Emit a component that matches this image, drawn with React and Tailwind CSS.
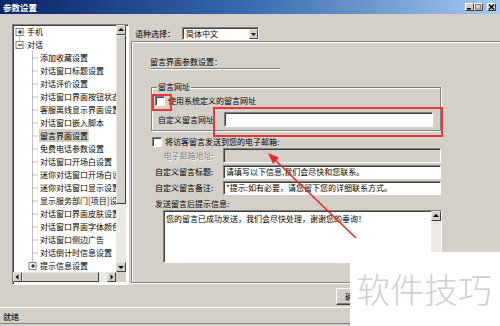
import React from 'react';

const Tri = ({ dir }) => {
  const pts = {
    up: '1,5 4,2 7,5',
    down: '1,3 4,6 7,3',
    left: '5,1 2,4 5,7',
    right: '3,1 6,4 3,7',
  }[dir];
  return (
    <svg width="8" height="8" viewBox="0 0 8 8">
      <polygon points={pts} fill="#000" />
    </svg>
  );
};

const SBtn = ({ dir, cls }) => (
  <div
    className={
      'flex items-center justify-center shrink-0 bg-[#d4d0c8] border border-t-[#e8e6e2] border-l-[#e8e6e2] border-b-[#404040] border-r-[#404040] ' +
      cls
    }
  >
    <Tri dir={dir} />
  </div>
);

const Check = () => (
  <div className="w-[10px] h-[10px] shrink-0 bg-white border border-t-[#808080] border-l-[#808080] border-b-white border-r-white shadow-[inset_1px_1px_0_#404040]" />
);

const sunken =
  'border border-t-[#808080] border-l-[#808080] border-b-white border-r-white shadow-[inset_1px_1px_0_#404040]';

const tree = [
  ['手机', 0, '+'],
  ['对话', 0, '-'],
  ['添加收藏设置', 1],
  ['对话窗口标题设置', 1],
  ['对话评价设置', 1],
  ['对话窗口界面按钮状态', 1],
  ['客服离线显示界面设置', 1],
  ['对话窗口嵌入脚本', 1],
  ['留言界面设置', 1, null, true],
  ['免费电话参数设置', 1],
  ['对话窗口开场白设置', 1],
  ['迷你对话窗口开场白设置', 1],
  ['迷你对话窗口显示设置', 1],
  ['显示服务部门[项目]设置', 1],
  ['对话窗口界面皮肤设置', 1],
  ['对话窗口界面字体颜色', 1],
  ['对话窗口侧边广告', 1],
  ['对话倒计时信息设置', 1],
  ['提示信息设置', 1, '+'],
];

const cy = (i) => 6.5 + 13 * i;

const TreeLines = () => (
  <svg className="absolute left-0 top-0 pointer-events-none" width="103" height="247">
    <g stroke="#808080" strokeWidth="1" strokeDasharray="1 1" fill="none">
      <line x1="6.5" y1={cy(0)} x2="6.5" y2={cy(1)} />
      <line x1="6.5" y1={cy(0) + 0.5} x2="12" y2={cy(0) + 0.5} />
      <line x1="6.5" y1={cy(1) + 0.5} x2="12" y2={cy(1) + 0.5} />
      <line x1="19.5" y1={cy(1) + 6} x2="19.5" y2={cy(18)} />
      {tree.map((t, i) =>
        t[1] === 1 ? (
          <line key={i} x1="19.5" y1={cy(i) + 0.5} x2="25" y2={cy(i) + 0.5} />
        ) : null
      )}
    </g>
    {[
      [6.5, 0, '+'],
      [6.5, 1, '-'],
      [19.5, 18, '+'],
    ].map(([x, i, s], k) => (
      <g key={k}>
        <rect x={x - 3.5} y={cy(i) - 3} width="7" height="7" fill="#fff" stroke="#808080" strokeWidth="1" />
        <line x1={x - 1.5} y1={cy(i) + 0.5} x2={x + 2.5} y2={cy(i) + 0.5} stroke="#000" strokeWidth="1" />
        {s === '+' ? (
          <line x1={x + 0.5} y1={cy(i) - 1.5} x2={x + 0.5} y2={cy(i) + 2.5} stroke="#000" strokeWidth="1" />
        ) : null}
      </g>
    ))}
  </svg>
);

const TreeBox = () => (
  <div className={'w-[117px] h-[261px] bg-white flex flex-col ' + sunken.replace('', '')}>
    <div className="flex h-[247px]">
      <div className="relative w-[103px] h-[247px] overflow-hidden">
        <TreeLines />
        {tree.map(([t, lvl, , sel], i) => (
          <div
            key={i}
            className={
              'h-[13px] flex items-center whitespace-nowrap ' +
              (lvl === 0 ? 'pl-[13px]' : 'pl-[26px]')
            }
          >
            <span className={'px-[1px] ' + (sel ? 'bg-[#d4d0c8]' : '')}>{t}</span>
          </div>
        ))}
      </div>
      <div className="w-[10px] h-[247px] flex flex-col bg-[#ebe9e5]">
        <SBtn dir="up" cls="w-[10px] h-[10px]" />
        <div className="h-[169px] shrink-0 bg-[#d4d0c8] border border-t-[#e8e6e2] border-l-[#e8e6e2] border-b-[#404040] border-r-[#404040]" />
        <div className="flex-1" />
        <SBtn dir="down" cls="w-[10px] h-[10px]" />
      </div>
    </div>
    <div className="flex h-[10px]">
      <div className="w-[103px] h-[10px] flex bg-[#ebe9e5]">
        <SBtn dir="left" cls="w-[9px] h-[10px]" />
        <div className="w-[77px] h-[10px] shrink-0 bg-[#d4d0c8] border border-t-[#e8e6e2] border-l-[#e8e6e2] border-b-[#404040] border-r-[#404040]" />
        <div className="flex-1" />
        <SBtn dir="right" cls="w-[9px] h-[10px]" />
      </div>
      <div className="w-[10px] h-[10px] bg-[#d4d0c8]" />
    </div>
  </div>
);

const TitleBtn = ({ children }) => (
  <div className="w-[9px] h-[8px] bg-[#d4d0c8] border border-t-white border-l-white border-b-[#404040] border-r-[#404040] flex items-center justify-center">
    {children}
  </div>
);

export default function App() {
  return (
    <div className="w-[500px] h-[326px] bg-[#d4d0c8] relative overflow-hidden flex flex-col font-['Noto_Sans_CJK_SC','Noto_Sans',sans-serif] text-[8px] leading-[13px] text-black">
      {/* title bar */}
      <div className="h-[14px] shrink-0 bg-linear-to-r from-[#0a246a] via-[#3a6ab0] to-[#a6caf0] flex items-center pl-[3px] pr-[4px]">
        <span className="text-white font-bold text-[8.5px] leading-[12px]">参数设置</span>
        <div className="ml-auto flex items-center">
          <TitleBtn>
            <svg width="7" height="6" viewBox="0 0 7 6">
              <rect x="1" y="4" width="4" height="1.5" fill="#000" />
            </svg>
          </TitleBtn>
          <TitleBtn>
            <svg width="7" height="6" viewBox="0 0 7 6">
              <rect x="0.5" y="0.5" width="5" height="4.5" fill="none" stroke="#808080" strokeWidth="1" />
            </svg>
          </TitleBtn>
          <div className="w-[4px]" />
          <TitleBtn>
            <svg width="7" height="6" viewBox="0 0 7 6">
              <path d="M1 0.5 L6 5.5 M6 0.5 L1 5.5" stroke="#000" strokeWidth="1.3" />
            </svg>
          </TitleBtn>
        </div>
      </div>

      {/* main */}
      <div className="flex-1 flex">
        <div className="w-[131px] shrink-0 pl-[12px] pt-[10px]">
          <TreeBox />
        </div>
        <div className="flex-1 flex flex-col">
          {/* language row */}
          <div className="h-[27px] shrink-0 flex items-start pt-[13px] pl-[4px]">
            <span className="leading-[13px]">语种选择：</span>
            <div className={'ml-[7px] w-[77px] h-[13px] bg-white flex items-center ' + sunken}>
              <span className="pl-[3px] flex-1 leading-[11px]">简体中文</span>
              <SBtn dir="down" cls="w-[9px] h-[10px] mr-[0px]" />
            </div>
          </div>

          {/* panel */}
          <div className="h-[242px] shrink-0 border-l border-t border-b border-[#808080] shadow-[inset_1px_1px_0_#fff,0_1px_0_#fff] flex flex-col">
            <div className="mt-[13px] ml-[18px] h-[13px]">留言界面参数设置：</div>
            <div className="ml-[18px] w-[130px] h-[1px] bg-[#808080] shadow-[0_1px_0_#fff]" />

            {/* group box */}
            <div className="mt-[18px] ml-[19px] w-[290px] h-[44px] border border-[#808080] shadow-[inset_1px_1px_0_#fff,1px_1px_0_#fff] flex flex-col">
              <div className="-mt-[8px] ml-[5px] px-[1px] w-fit h-[13px] bg-[#d4d0c8]">留言网址</div>
              <div className="mt-[1px] h-[13px] flex items-center">
                <div className="ml-[3px]">
                  <Check />
                </div>
                <span className="ml-[3px]">使用系统定义的留言网址</span>
              </div>
              <div className="mt-[5px] h-[15px] flex items-center">
                <span className="ml-[6px] w-[56px] leading-[15px] whitespace-nowrap">自定义留言网址</span>
                <div className={'ml-[10px] w-[209px] h-[15px] bg-white ' + sunken} />
              </div>
            </div>

            <div className="mt-[4px] ml-[20px] h-[13px] flex items-center">
              <Check />
              <span className="ml-[3px]">将访客留言发送到您的电子邮箱:</span>
            </div>

            <div className="h-[15px] flex items-center">
              <span className="ml-[20px] w-[62px] text-right leading-[15px] text-[#808080] [text-shadow:1px_1px_0_#fff] whitespace-nowrap">
                电子邮箱地址:
              </span>
              <div className={'ml-[9px] w-[218px] h-[15px] bg-[#d4d0c8] ' + sunken} />
            </div>

            <div className="mt-[2px] h-[14px] flex items-center">
              <span className="ml-[23px] w-[68px] leading-[14px] whitespace-nowrap">自定义留言标题:</span>
              <div className={'w-[218px] h-[14px] bg-white pl-[2px] leading-[12px] whitespace-nowrap overflow-hidden ' + sunken}>
                请填写以下信息,我们会尽快和您联系。
              </div>
            </div>

            <div className="mt-[2px] h-[14px] flex items-center">
              <span className="ml-[23px] w-[68px] leading-[14px] whitespace-nowrap">自定义留言备注:</span>
              <div className={'w-[218px] h-[14px] bg-white pl-[2px] leading-[12px] whitespace-nowrap overflow-hidden ' + sunken}>
                *提示:如有必要，请您留下您的详细联系方式。
              </div>
            </div>

            <div className="mt-[2px] ml-[23px] h-[13px]">发送留言后提示信息:</div>

            <div className={'ml-[31px] w-[279px] h-[53px] bg-white flex ' + sunken}>
              <div className="flex-1 pl-[2px] pt-[2px] leading-[12px] whitespace-nowrap">
                您的留言已成功发送，我们会尽快处理，谢谢您的垂询！
              </div>
              <div className="w-[10px] flex flex-col bg-[#ebe9e5]">
                <SBtn dir="up" cls="w-[10px] h-[10px]" />
              </div>
            </div>
          </div>

          {/* button row */}
          <div className="h-[24px] shrink-0 pl-[205px] pt-[5px]">
            <div className="w-[60px] h-[17px] border border-t-white border-l-white border-b-[#404040] border-r-[#404040] shadow-[inset_-1px_-1px_0_#808080] flex items-center pl-[8px]">
              确定
            </div>
          </div>
        </div>
      </div>

      {/* status bar */}
      <div className="h-[19px] shrink-0 border-t border-white flex flex-col">
        <div className="h-[15px] pl-[3px] pt-[2px] leading-[13px]">就绪</div>
        <div className="h-[1px] bg-[#808080]" />
      </div>

      {/* red highlight boxes */}
      <div className="absolute left-[152px] top-[94px] w-[20px] h-[17px] border-2 border-[#e4383c]" />
      <div className="absolute left-[213px] top-[107px] w-[230px] h-[30px] border-2 border-[#e4383c]" />

      {/* red arrow */}
      <svg className="absolute left-0 top-0 pointer-events-none" width="500" height="326">
        <line x1="356" y1="238" x2="275.5" y2="160.5" stroke="#e3292e" strokeWidth="1.6" />
        <polygon points="268,153 279,157.5 273,164" fill="#e3292e" />
      </svg>

      {/* watermark */}
      <div className="absolute left-[350px] top-[252px] w-[150px] h-[74px] bg-white flex items-center pl-[6px]">
        <span className="text-[34px] leading-[40px] text-[#cfcfcf] font-light tracking-[0px]">软件技巧</span>
      </div>
    </div>
  );
}
